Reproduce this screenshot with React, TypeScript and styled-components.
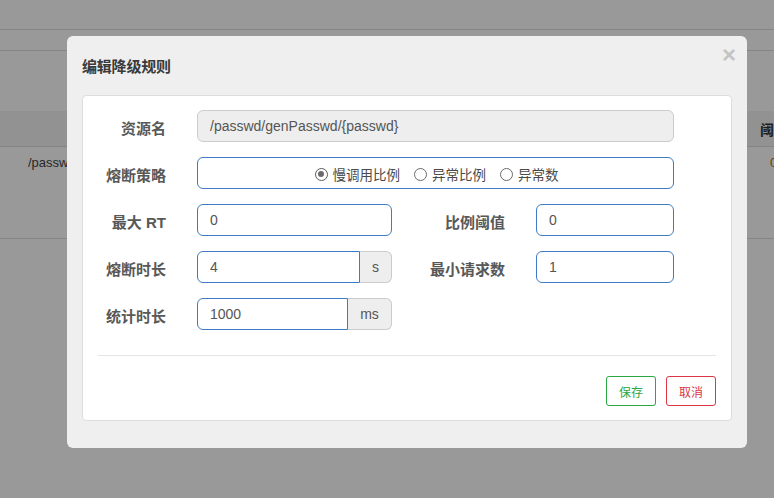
import React from "react";
import styled, { createGlobalStyle } from "styled-components";

const Global = createGlobalStyle`
  html, body { margin: 0; padding: 0; }
  body {
    background: #fff;
    font-family: "Liberation Sans", "Noto Sans CJK SC", Arial, sans-serif;
    font-size: 14px;
    color: #333;
    width: 774px;
    height: 498px;
    overflow: hidden;
  }
`;

/* ---------- background page ---------- */
const Page = styled.div`
  width: 774px;
  height: 498px;
  display: flex;
  flex-direction: column;
`;
const TopBar = styled.div<{ $h: number }>`
  height: ${(p) => p.$h}px;
  border-bottom: 1px solid #dcdcdc;
  flex-shrink: 0;
`;
const Spacer = styled.div<{ $h: number }>`
  height: ${(p) => p.$h}px;
  flex-shrink: 0;
`;
const TableHead = styled.div`
  height: 35px;
  background: #f3f3f3;
  border-bottom: 1px solid #dcdcdc;
  display: flex;
  align-items: center;
  font-family: "Noto Sans CJK SC", sans-serif;
  font-weight: bold;
  font-size: 14px;
  color: #333;
  white-space: nowrap;
  overflow: hidden;
  flex-shrink: 0;
`;
const TableRow = styled.div`
  height: 92px;
  border-bottom: 1px solid #dcdcdc;
  display: flex;
  align-items: flex-start;
  padding-top: 8px;
  box-sizing: border-box;
  white-space: nowrap;
  overflow: hidden;
  font-size: 13px;
  color: #444;
  flex-shrink: 0;
`;
const Cell = styled.div<{ $w: number; $color?: string }>`
  width: ${(p) => p.$w}px;
  flex-shrink: 0;
  overflow: hidden;
  color: ${(p) => p.$color || "inherit"};
`;

/* ---------- modal ---------- */
const Backdrop = styled.div`
  position: fixed;
  inset: 0;
  background: rgba(0, 0, 0, 0.4);
`;
const Modal = styled.div`
  position: fixed;
  left: 67px;
  top: 36px;
  width: 680px;
  height: 412px;
  box-sizing: border-box;
  background: #efefef;
  border-radius: 6px;
  padding: 0 15px;
  display: flex;
  flex-direction: column;
`;
const Header = styled.div`
  height: 59px;
  display: flex;
  align-items: center;
  box-sizing: border-box;
`;
const Title = styled.h4`
  margin: 0;
  font-family: "Noto Sans CJK SC", sans-serif;
  font-size: 15px;
  font-weight: bold;
  color: #3a3a3a;
  letter-spacing: -0.2px;
`;
const Close = styled.span`
  position: absolute;
  right: 11px;
  top: 7px;
  font-family: "Liberation Sans", Arial, sans-serif;
  font-size: 24px;
  font-weight: bold;
  color: #c4c4c4;
  line-height: 1;
`;
const Panel = styled.div`
  background: #fff;
  border: 1px solid #dddddd;
  border-radius: 4px;
  height: 326px;
  box-sizing: border-box;
  padding: 14px 15px 0;
  display: flex;
  flex-direction: column;
`;
const Form = styled.div`
  display: flex;
  flex-direction: column;
  gap: 15px;
`;
const Row = styled.div`
  display: flex;
  align-items: center;
  height: 32px;
`;
const Label = styled.label<{ $w: number }>`
  width: ${(p) => p.$w}px;
  flex-shrink: 0;
  text-align: right;
  margin-right: 31px;
  font-family: "Liberation Sans", "Noto Sans CJK SC", sans-serif;
  font-weight: bold;
  font-size: 15px;
  color: #585858;
  padding-top: 3px;
  white-space: nowrap;
`;
const Input = styled.div<{ $w: number; $disabled?: boolean; $addon?: boolean }>`
  width: ${(p) => p.$w}px;
  height: 32px;
  box-sizing: border-box;
  border: 1px solid ${(p) => (p.$disabled ? "#cccccc" : "#3d7cc4")};
  background: ${(p) => (p.$disabled ? "#eeeeee" : "#fff")};
  border-radius: ${(p) => (p.$addon ? "6px 0 0 6px" : "6px")};
  padding: 0 12px;
  display: flex;
  align-items: center;
  font-family: "Liberation Sans", Arial, sans-serif;
  font-size: 14px;
  color: #555;
  flex-shrink: 0;
`;
const Addon = styled.div<{ $w: number }>`
  width: ${(p) => p.$w}px;
  height: 32px;
  box-sizing: border-box;
  border: 1px solid #cccccc;
  border-left: none;
  border-radius: 0 6px 6px 0;
  background: #eeeeee;
  display: flex;
  align-items: center;
  justify-content: center;
  font-family: "Liberation Sans", Arial, sans-serif;
  font-size: 14px;
  color: #555;
  flex-shrink: 0;
`;
const RadioBox = styled(Input)`
  justify-content: center;
  padding: 2px 0 0 2px;
  gap: 14px;
`;
const RadioItem = styled.span`
  display: inline-flex;
  align-items: center;
  gap: 5px;
  font-family: "Noto Sans CJK SC", sans-serif;
  font-size: 13.5px;
  color: #4a4a4a;
`;
const RadioDot = styled.span<{ $on?: boolean }>`
  width: 13px;
  height: 13px;
  border-radius: 50%;
  border: 1px solid ${(p) => (p.$on ? "#5a5a5a" : "#6a6a6a")};
  box-sizing: border-box;
  position: relative;
  background: #fff;
  &::after {
    content: "";
    display: ${(p) => (p.$on ? "block" : "none")};
    position: absolute;
    left: 2.5px;
    top: 2.5px;
    width: 6px;
    height: 6px;
    border-radius: 50%;
    background: #6a6a6a;
  }
`;
const Divider = styled.div`
  height: 1px;
  background: #e5e5e5;
  margin-top: 25px;
`;
const Footer = styled.div`
  display: flex;
  justify-content: flex-end;
  gap: 10px;
  margin-top: 20px;
`;
const Btn = styled.button<{ $color: string }>`
  width: 50px;
  height: 30px;
  box-sizing: border-box;
  border: 1px solid ${(p) => p.$color};
  color: ${(p) => p.$color};
  background: #fff;
  border-radius: 3px;
  font-family: "Noto Sans CJK SC", sans-serif;
  font-size: 12px;
  padding: 0;
  cursor: pointer;
`;

export default function App() {
  return (
    <>
      <Global />
      <Page>
        <TopBar $h={29} />
        <TopBar $h={20} />
        <Spacer $h={60} />
        <TableHead>
          <Cell $w={760} />
          <Cell $w={14}>阈值</Cell>
        </TableHead>
        <TableRow>
          <Cell $w={28} />
          <Cell $w={39}>/passwd/genPasswd/{"{passwd}"}</Cell>
          <Cell $w={703} />
          <Cell $w={4} $color="#c26a1b">0</Cell>
        </TableRow>
      </Page>
      <Backdrop />
      <Modal>
        <Close>×</Close>
        <Header>
          <Title>编辑降级规则</Title>
        </Header>
        <Panel>
          <Form>
            <Row>
              <Label $w={68}>资源名</Label>
              <Input $w={477} $disabled>
                /passwd/genPasswd/{"{passwd}"}
              </Input>
            </Row>
            <Row>
              <Label $w={68}>熔断策略</Label>
              <RadioBox $w={477}>
                <RadioItem>
                  <RadioDot $on />
                  慢调用比例
                </RadioItem>
                <RadioItem>
                  <RadioDot />
                  异常比例
                </RadioItem>
                <RadioItem>
                  <RadioDot />
                  异常数
                </RadioItem>
              </RadioBox>
            </Row>
            <Row>
              <Label $w={68}>最大 RT</Label>
              <Input $w={195}>0</Input>
              <Label $w={113}>比例阈值</Label>
              <Input $w={138}>0</Input>
            </Row>
            <Row>
              <Label $w={68}>熔断时长</Label>
              <Input $w={163} $addon>
                4
              </Input>
              <Addon $w={32}>s</Addon>
              <Label $w={113}>最小请求数</Label>
              <Input $w={138}>1</Input>
            </Row>
            <Row>
              <Label $w={68}>统计时长</Label>
              <Input $w={151} $addon>
                1000
              </Input>
              <Addon $w={44}>ms</Addon>
            </Row>
          </Form>
          <Divider />
          <Footer>
            <Btn $color="#28a745">保存</Btn>
            <Btn $color="#dc3545">取消</Btn>
          </Footer>
        </Panel>
      </Modal>
    </>
  );
}
